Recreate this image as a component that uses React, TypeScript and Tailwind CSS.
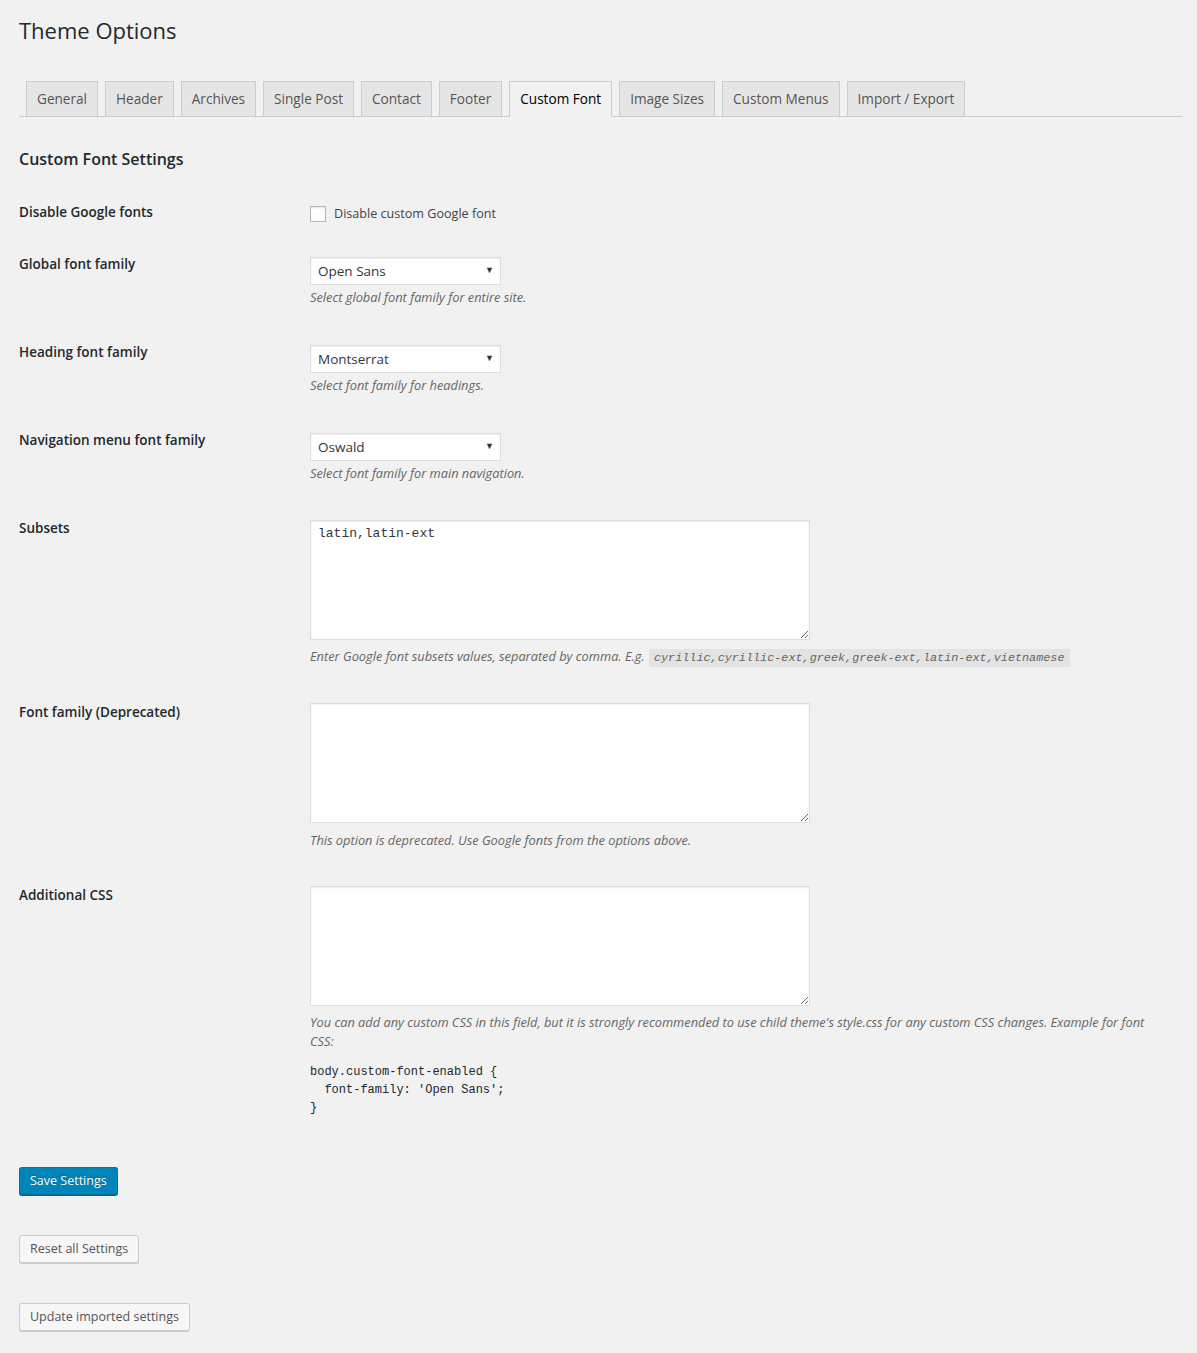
import React from 'react';

const tabs = [
  'General',
  'Header',
  'Archives',
  'Single Post',
  'Contact',
  'Footer',
  'Custom Font',
  'Image Sizes',
  'Custom Menus',
  'Import / Export',
];

function Select({ value }: { value: string }) {
  return (
    <div className="relative mt-[2px] w-[191px]">
      <select
        defaultValue={value}
        className="h-[28px] w-full appearance-none border border-[#ddd] bg-white pl-[7px] text-[13.5px] text-[#32373c] shadow-[inset_0_1px_2px_rgba(0,0,0,0.07)] outline-none"
      >
        <option>{value}</option>
      </select>
      <span className="pointer-events-none absolute right-[7px] top-[8px] text-[9px] leading-none text-[#333]">▼</span>
    </div>
  );
}

function Desc({ children, className = '' }: { children: React.ReactNode; className?: string }) {
  return <p className={`text-[12.8px] italic text-[#666] ${className}`}>{children}</p>;
}

function Textarea({ value = '', className = '' }: { value?: string; className?: string }) {
  return (
    <textarea
      defaultValue={value}
      className={`block h-[120px] w-[500px] border border-[#ddd] bg-white px-[7px] py-[3px] font-['Liberation_Mono',monospace] text-[13px] leading-[20px] text-[#32373c] shadow-[inset_0_1px_2px_rgba(0,0,0,0.07)] outline-none ${className}`}
    />
  );
}

function Row({ label, children, className = '' }: { label: string; children: React.ReactNode; className?: string }) {
  return (
    <div className={`flex ${className}`}>
      <div className="w-[291px] shrink-0 text-[13.5px] font-semibold leading-[18px] text-[#23282d]">{label}</div>
      <div className="flex flex-col">{children}</div>
    </div>
  );
}

export default function App() {
  return (
    <div className="min-h-screen bg-[#f1f1f1] pl-[19px] pr-[15px] pb-[22px] font-['Open_Sans',sans-serif] text-[#23282d]">
      <h1 className="pt-[16px] text-[22px] font-normal leading-[29px] text-[#23282d]">Theme Options</h1>

      <div className="mt-[36px] flex border-b border-[#ccc] pl-[7px]">
        {tabs.map((t) => {
          const active = t === 'Custom Font';
          return (
            <div
              key={t}
              className={`-mb-px mr-[7px] border border-[#ccc] px-[10px] py-[5px] text-[13.6px] leading-[24px] ${
                active ? 'border-b-[#f1f1f1] bg-[#f1f1f1] text-black' : 'bg-[#e5e5e5] text-[#555]'
              }`}
            >
              {t}
            </div>
          );
        })}
      </div>

      <h2 className="mt-[30px] text-[16px] font-semibold leading-[24px] text-[#23282d]">Custom Font Settings</h2>

      <div className="mt-[32px]">
        <Row label="Disable Google fonts" className="pb-[33px]">
          <label className="mt-[3px] flex items-center gap-[8px] text-[12.6px] leading-[16px] text-[#444]">
            <span className="block h-[16px] w-[16px] border border-[#b4b9be] bg-white shadow-[inset_0_1px_2px_rgba(0,0,0,0.1)]" />
            Disable custom Google font
          </label>
        </Row>

        <Row label="Global font family" className="pb-[37px]">
          <Select value="Open Sans" />
          <Desc className="mt-[3px] leading-[18px]">Select global font family for entire site.</Desc>
        </Row>

        <Row label="Heading font family" className="pb-[37px]">
          <Select value="Montserrat" />
          <Desc className="mt-[3px] leading-[18px]">Select font family for headings.</Desc>
        </Row>

        <Row label="Navigation menu font family" className="pb-[37px]">
          <Select value="Oswald" />
          <Desc className="mt-[3px] leading-[18px]">Select font family for main navigation.</Desc>
        </Row>

        <Row label="Subsets" className="pb-[35px]">
          <Textarea value="latin,latin-ext" className="mt-[1px]" />
          <Desc className="mt-[6px] leading-[20px]">
            Enter Google font subsets values, separated by comma. E.g.{' '}
            <code className="ml-[1px] bg-[#e3e3e3] px-[5px] py-[2px] font-['Liberation_Mono',monospace] text-[11.8px] italic text-[#666]">
              cyrillic,cyrillic-ext,greek,greek-ext,latin-ext,vietnamese
            </code>
          </Desc>
        </Row>

        <Row label="Font family (Deprecated)" className="pb-[36px]">
          <Textarea />
          <Desc className="mt-[7px] leading-[20px]">This option is deprecated. Use Google fonts from the options above.</Desc>
        </Row>

        <Row label="Additional CSS">
          <Textarea />
          <Desc className="mt-[7px] w-[862px] leading-[19px]">
            You can add any custom CSS in this field, but it is strongly recommended to use child theme's style.css for any custom CSS changes. Example for font
            <br />
            CSS:
          </Desc>
          <pre className="mt-[12px] font-['Liberation_Mono',monospace] text-[12px] leading-[18px] text-[#23282d]">
{`body.custom-font-enabled {
  font-family: 'Open Sans';
}`}
          </pre>
        </Row>
      </div>

      <div className="mt-[50px] flex flex-col items-start gap-[40px]">
        <button className="h-[28px] rounded-[3px] border border-[#0073aa] border-b-[#006799] bg-[#0085ba] px-[10px] text-[12.5px] text-white shadow-[0_1px_0_#006799] [text-shadow:0_-1px_1px_#006799]">
          Save Settings
        </button>
        <button className="h-[28px] rounded-[3px] border border-[#ccc] bg-[#f7f7f7] px-[10px] text-[12.5px] text-[#555] shadow-[0_1px_0_#ccc]">
          Reset all Settings
        </button>
        <button className="h-[28px] rounded-[3px] border border-[#ccc] bg-[#f7f7f7] px-[10px] text-[12.5px] text-[#555] shadow-[0_1px_0_#ccc]">
          Update imported settings
        </button>
      </div>
    </div>
  );
}
